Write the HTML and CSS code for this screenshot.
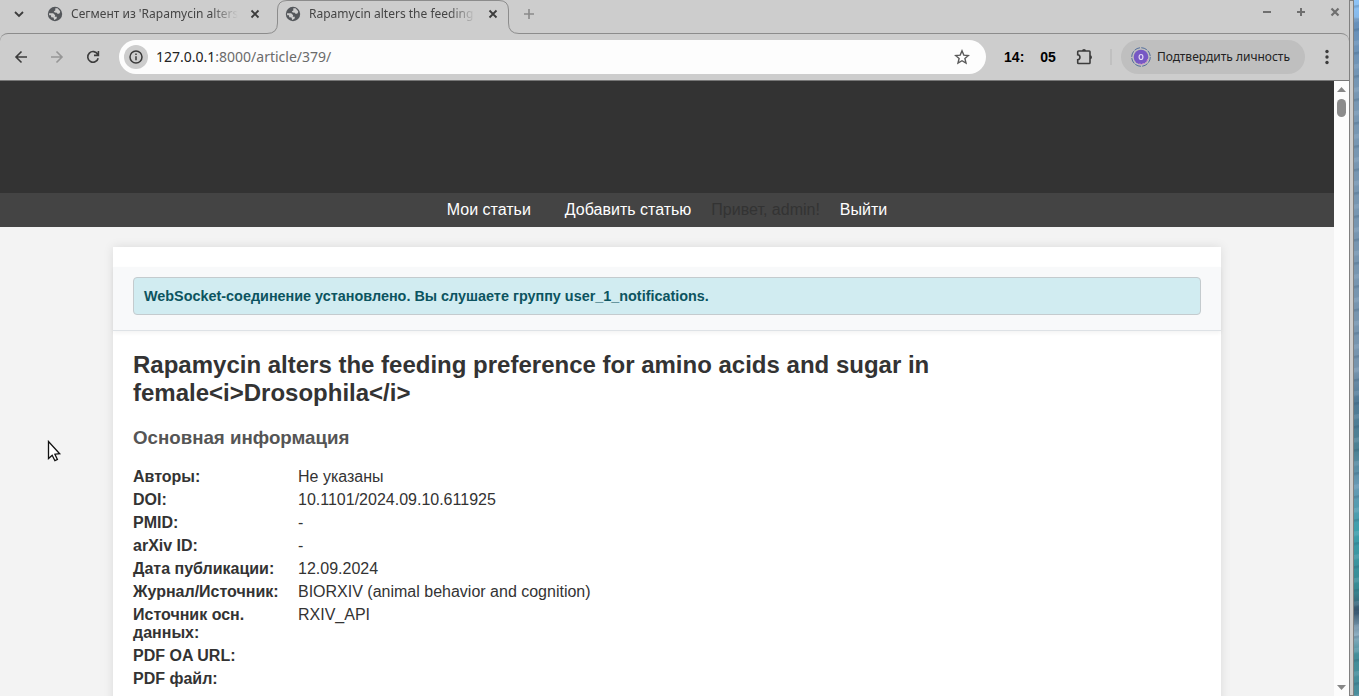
FILE: index.html
```html
<!DOCTYPE html>
<html lang="ru">
<head>
<meta charset="utf-8">
<title>Rapamycin alters the feeding preference</title>
<link rel="stylesheet" href="styles.css">
</head>
<body>
<svg class="defs" aria-hidden="true">
  <symbol id="globe" viewBox="0 0 16 16">
    <circle cx="8" cy="8" r="7.2" fill="#54575b"/>
    <path d="M8.300 2.300H10.500L13.200 5.200 12.700 7.300 10.800 7.900 9.800 6.700 7.700 6.500 6.800 5.300 8.300 4.400ZM1.900 7.200H6.200L8.200 9.300 7.700 10.800H9.900L9.500 12.800 7.200 14 6.500 11.500 4.200 11.300 4 9.300H2.200Z" fill="#cdcdcd"/>
  </symbol>
  <symbol id="cross" viewBox="0 0 12 12">
    <path d="M2.500 2.500l7 7M9.500 2.500l-7 7" stroke="currentColor" stroke-width="1.800" fill="none"/>
  </symbol>
</svg>
<div class="window">
  <div class="tabstrip">
    <button class="tab-search" aria-label="Поиск вкладок"><svg width="12" height="12" viewBox="0 0 12 12"><path d="M2 4l4 4 4-4" fill="none" stroke="#3c3c3c" stroke-width="1.800"/></svg></button>
    <div class="tab">
      <svg class="favicon"><use href="#globe"/></svg>
      <span class="tab-title">Сегмент из 'Rapamycin alters</span>
      <button class="tab-close" aria-label="Закрыть"><svg width="12" height="12"><use href="#cross"/></svg></button>
    </div>
    <div class="tab-active">
      <svg class="cap" width="20" height="34" viewBox="0 0 20 34"><path d="M0 33.500Q10.500 33.500 10.500 23V10Q10.500.5 20 .5" fill="none" stroke="#8c8c8c"/></svg>
      <div class="tab-body">
        <svg class="favicon"><use href="#globe"/></svg>
        <span class="tab-title">Rapamycin alters the feeding</span>
        <button class="tab-close" aria-label="Закрыть"><svg width="12" height="12"><use href="#cross"/></svg></button>
      </div>
      <svg class="cap" width="20" height="34" viewBox="0 0 20 34"><path d="M0 .5Q9.500.5 9.500 10V23Q9.500 33.500 20 33.500" fill="none" stroke="#8c8c8c"/></svg>
    </div>
    <button class="new-tab" aria-label="Новая вкладка"><svg width="12" height="12" viewBox="0 0 12 12"><path d="M6 1v10M1 6h10" stroke="#8a8a8a" stroke-width="1.600"/></svg></button>
    <div class="window-buttons">
      <button aria-label="Свернуть"><svg width="10" height="10" viewBox="0 0 10 10"><path d="M1 5h8" stroke="#6f6f6f" stroke-width="2"/></svg></button>
      <button aria-label="Развернуть"><svg width="10" height="10" viewBox="0 0 10 10"><path d="M1 5h8M5 1v8" stroke="#6f6f6f" stroke-width="2"/></svg></button>
      <button aria-label="Закрыть окно"><svg width="10" height="10" viewBox="0 0 10 10"><path d="M1.500 1.500l7 7M8.500 1.500l-7 7" stroke="#6f6f6f" stroke-width="2.200"/></svg></button>
    </div>
  </div>

  <div class="toolbar">
    <div class="nav-buttons">
      <button aria-label="Назад"><svg width="14" height="14" viewBox="0 0 14 14"><path d="M13 7H2M7.500 1.500L2 7l5.500 5.500" fill="none" stroke="#3c3c3c" stroke-width="1.600"/></svg></button>
      <button aria-label="Вперёд"><svg width="14" height="14" viewBox="0 0 14 14"><path d="M1 7h11M6.500 1.500L12 7l-5.500 5.500" fill="none" stroke="#969696" stroke-width="1.600"/></svg></button>
      <button aria-label="Обновить"><svg width="14" height="14" viewBox="0 0 14 14"><path d="M11.700 4.300A5.300 5.300 0 1 0 12.200 8.200M12.400 1v4.400H8" fill="none" stroke="#3c3c3c" stroke-width="1.600"/></svg></button>
    </div>
    <div class="omnibox">
      <button class="site-info" aria-label="Сведения о сайте"><svg width="14" height="14" viewBox="0 0 14 14"><circle cx="7" cy="7" r="6" fill="none" stroke="#3a3a3a" stroke-width="1.500"/><path d="M7 6.300v4M7 3.500v1.500" stroke="#3a3a3a" stroke-width="1.500"/></svg></button>
      <a class="url" href="#"><b>127.0.0.1</b>:8000/article/379/</a>
      <button class="bookmark" aria-label="В закладки"><svg width="16" height="16" viewBox="0 0 16 16"><path d="M8 1.800l1.800 4.300 4.600.4-3.500 3 1.100 4.600L8 11.700l-4 2.400 1.100-4.600-3.500-3 4.600-.4z" fill="none" stroke="#5a5a5a" stroke-width="1.400"/></svg></button>
    </div>
    <span class="clock"><b>14:</b><b>05</b></span>
    <button class="extensions" aria-label="Расширения"><svg width="18" height="18" viewBox="0 0 18 18"><path d="M2.500 3H13.200Q14 3 14 3.800V14.700Q14 15.500 13.200 15.500H2.500Q1.700 15.500 1.700 14.700V11.700C4.700 11.500 4.700 7 1.700 6.800V3.800Q1.700 3 2.500 3Z" fill="none" stroke="#3c3c3c" stroke-width="1.600"/><path d="M6 3a2 2 0 0 1 4 0zM14 7.200a2 2 0 0 1 0 4z" fill="#3c3c3c"/></svg></button>
    <span class="divider"></span>
    <button class="profile">
      <svg width="20" height="20" viewBox="0 0 20 20"><circle cx="10" cy="10" r="9.300" fill="none" stroke="#536e9c" stroke-dasharray="6 1.300"/><circle cx="10" cy="10" r="7.300" fill="#7658c4"/><path d="M16.800 12A7.200 7.200 0 0 1 8 17" fill="none" stroke="#dc92cf" stroke-dasharray="2 1"/><ellipse cx="10" cy="10" rx="1.900" ry="2.500" fill="none" stroke="#e3d9f6" stroke-width="1.200"/></svg>
      Подтвердить личность
    </button>
    <button class="menu" aria-label="Меню"><svg width="4" height="16" viewBox="0 0 4 16"><g fill="#3c3c3c"><circle cx="2" cy="2.500" r="1.700"/><circle cx="2" cy="8" r="1.700"/><circle cx="2" cy="13.500" r="1.700"/></g></svg></button>
  </div>

  <div class="viewport">
    <div class="page">
      <header class="site-header"></header>
      <nav class="site-nav">
        <a class="articles" href="#">Мои статьи</a>
        <a href="#">Добавить статью</a>
        <span>Привет, admin!</span>
        <a href="#">Выйти</a>
      </nav>
      <main class="card">
        <div class="notifications">
          <div class="alert">WebSocket-соединение установлено. Вы слушаете группу user_1_notifications.</div>
        </div>
        <h1>Rapamycin alters the feeding preference for amino acids and sugar in female&lt;i&gt;Drosophila&lt;/i&gt;</h1>
        <h3>Основная информация</h3>
        <dl class="details">
          <dt>Авторы:</dt><dd>Не указаны</dd>
          <dt>DOI:</dt><dd>10.1101/2024.09.10.611925</dd>
          <dt>PMID:</dt><dd>-</dd>
          <dt>arXiv ID:</dt><dd>-</dd>
          <dt>Дата публикации:</dt><dd>12.09.2024</dd>
          <dt>Журнал/Источник:</dt><dd>BIORXIV (animal behavior and cognition)</dd>
          <dt>Источник осн. данных:</dt><dd>RXIV_API</dd>
          <dt>PDF OA URL:</dt><dd></dd>
          <dt>PDF файл:</dt><dd></dd>
        </dl>
      </main>
    </div>
    <div class="scrollbar">
      <svg width="9" height="5" viewBox="0 0 9 5"><path d="M0 5L4.500 0 9 5z" fill="#868686"/></svg>
      <span class="thumb"></span>
      <svg class="down" width="9" height="5" viewBox="0 0 9 5"><path d="M0 0h9L4.500 5z" fill="#868686"/></svg>
    </div>
  </div>
</div>
<div class="frame"></div>
<div class="wallpaper"></div>
<svg class="cursor" width="16" height="24" viewBox="0 0 16 24"><path d="M1.500 1.500V18.500L5.200 15.200 7.900 20.700 10.400 19.500 7.900 14.200 12.700 13.700Z" fill="#fff" stroke="#111" stroke-width="1.300"/></svg>
</body>
</html>
```

FILE: styles.css
```css
* { box-sizing: border-box; }

body {
  margin: 0;
  height: 100vh;
  display: flex;
  overflow: hidden;
  background: #cdcdcd;
  color: #333;
  font: 16px/18px "Liberation Sans", Arial, sans-serif;
}

button {
  margin: 0;
  padding: 0;
  border: 0;
  background: none;
  color: #3c3c3c;
  font: inherit;
  display: flex;
  align-items: center;
  justify-content: center;
}

a { text-decoration: none; }
svg { display: block; flex: none; }
.defs { position: absolute; width: 0; height: 0; }

.window {
  flex: 1;
  min-width: 0;
  display: flex;
  flex-direction: column;
}

/* Tab strip */
.tabstrip {
  display: flex;
  height: 33px;
  font: 12px/16px "Noto Sans", sans-serif;
  color: #454545;
}

.tab-search { width: 38px; height: 28px; }

.tab {
  display: flex;
  align-items: center;
  height: 28px;
  width: 229px;
  padding-left: 9px;
}

.favicon { width: 16px; height: 16px; margin-right: 8px; }

.tab-title {
  flex: none;
  width: 167px;
  white-space: nowrap;
  mask-image: linear-gradient(to right, #000 140px, transparent);
}

.tab-close { width: 12px; height: 12px; margin-left: 11px; }

.tab-active {
  display: flex;
  height: 34px;
  margin-bottom: -1px;
  background: #cdcdcd;
  position: relative;
}

.tab-body {
  display: flex;
  align-items: center;
  width: 212px;
  height: 28px;
  border-top: 1px solid #8c8c8c;
  padding-bottom: 1px;
}

.tab-body .favicon { margin-left: -2px; }
.new-tab { width: 20px; height: 28px; }

.window-buttons {
  display: flex;
  gap: 24px;
  height: 24px;
  margin-left: auto;
  padding-right: 9px;
}

/* Toolbar */
.toolbar {
  display: flex;
  align-items: center;
  height: 48px;
  border-top: 1px solid #8c8c8c;
  border-bottom: 1px solid #777;
  border-radius: 8px 8px 0 0;
  padding: 0 20px 0 14px;
}

.nav-buttons { display: flex; gap: 22px; margin-right: 19px; }

.omnibox {
  flex: 1;
  display: flex;
  align-items: center;
  height: 34px;
  padding: 0 16px 0 5px;
  border-radius: 17px;
  background: #fdfdfd;
}

.site-info {
  width: 24px;
  height: 24px;
  border-radius: 50%;
  background: #cdcdcd;
}

.url {
  margin-left: 8px;
  font: 14px/20px "Noto Sans", sans-serif;
  color: #6b6b6b;
}

.url b { font-weight: 400; color: #222; }
.bookmark { margin-left: auto; }

.clock {
  display: flex;
  gap: 16px;
  margin-left: 18px;
  color: #000;
  font-size: 14px;
}

.extensions { margin-left: 20px; }

.divider {
  width: 2px;
  height: 16px;
  margin-left: 16px;
  background: #c0c0c0;
}

.profile {
  gap: 6px;
  height: 34px;
  margin-left: 9px;
  padding: 0 15px 0 10px;
  border-radius: 17px;
  background: #bfbfbf;
  color: #222;
  font: 12px/16px "Noto Sans", sans-serif;
  white-space: nowrap;
}

.menu { margin-left: 20px; }

/* Web page */
.viewport {
  flex: 1;
  min-height: 0;
  display: flex;
}

.page {
  flex: 1;
  overflow: hidden;
  background: #f3f3f3;
}

.site-header { height: 112px; background: #333; }

.site-nav {
  display: flex;
  justify-content: center;
  gap: 20px;
  padding: 8px 0;
  background: #444;
}

.site-nav a { color: #fff; }
.site-nav .articles { margin-right: 14px; }

.card {
  margin: 20px 113px;
  padding: 20px;
  background: #fff;
  box-shadow: 0 0 10px rgba(0, 0, 0, 0.1);
}

.notifications {
  margin: 0 -20px 20px;
  padding: 10px 20px 15px;
  border-bottom: 1px solid #dee2e6;
  background: #f8f9fa;
  box-shadow: 0 2px 4px rgba(0, 0, 0, 0.05);
}

.alert {
  padding: 10px;
  border: 1px solid #c4cbce;
  border-radius: 4px;
  background: #d1ecf1;
  color: #0c5460;
  font-size: 0.9em;
  font-weight: 700;
  line-height: 16px;
}

h1 {
  margin: 0 0 20px;
  font-size: 24px;
  line-height: 28px;
}

h3 {
  margin: 0 0 20px;
  color: #555;
  line-height: 21px;
}

.details {
  display: grid;
  grid-template-columns: 150px 1fr;
  gap: 5px 15px;
  margin: 0;
}

dt { font-weight: 700; }
dd { margin: 0; }

.scrollbar {
  display: flex;
  flex-direction: column;
  align-items: center;
  width: 15px;
  padding: 6px 0;
  background: #fcfcfc;
}

.thumb {
  width: 9px;
  height: 18px;
  margin-top: 7px;
  border-radius: 5px;
  background: #8b8b8b;
}

.down { margin-top: auto; }

/* Desktop behind the window */
.frame {
  width: 5px;
  border: 1px solid #808080;
  background: #cdcdcd;
}

.wallpaper {
  width: 5px;
  background:
    repeating-linear-gradient(170deg, transparent 0 5px, rgba(30, 65, 95, 0.2) 6px 7px, transparent 9px 17px, rgba(200, 220, 240, 0.15) 18px 21px, transparent 23px),
    linear-gradient(#8fc4f7 0, #86b9ea 17px, #6690bb 19px, #7897b3 90px, #7895ae 370px, #527a96 400px, #4d8293 450px, #6899b4 485px, #3fa0ac 530px, #398992 590px, #38566f 610px, #8fafc2 635px, #438e99 655px, #4b8d9c 100%);
}

.cursor { position: absolute; left: 47px; top: 440px; }
```
